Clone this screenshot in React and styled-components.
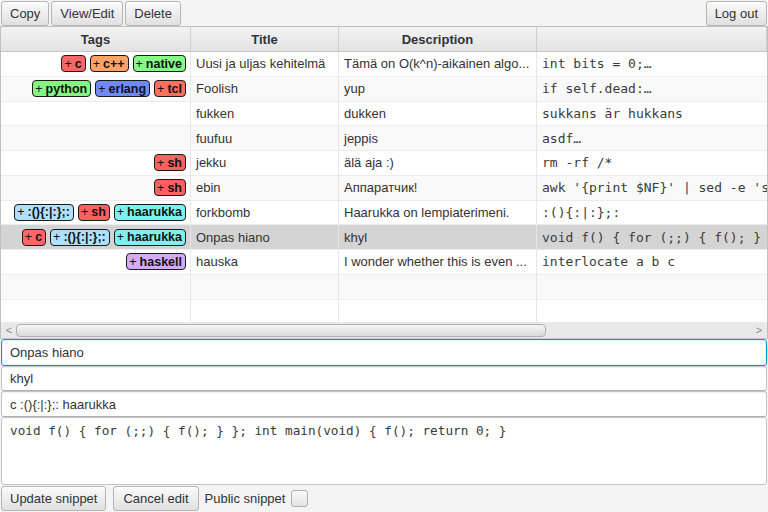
import styled, { createGlobalStyle } from "styled-components";

const GlobalStyle = createGlobalStyle`
  html, body {
    margin: 0;
    padding: 0;
    background: #f4f4f4;
  }
  body {
    font-family: "Liberation Sans", Arial, sans-serif;
    font-size: 13px;
    color: #333;
  }
`;

const tagColors = {
  c: "#ff6666",
  "c++": "#ffa366",
  native: "#85ff85",
  python: "#85f585",
  erlang: "#7089ff",
  tcl: "#ff7060",
  sh: "#ff6161",
  ":(){:|:};:": "#aee0ff",
  haarukka: "#7ff0f0",
  haskell: "#d4aaff",
};

const snippets = [
  { tags: ["c", "c++", "native"], title: "Uusi ja uljas kehitelmä", desc: "Tämä on O(k^n)-aikainen algo...", code: "int bits = 0;…" },
  { tags: ["python", "erlang", "tcl"], title: "Foolish", desc: "yup", code: "if self.dead:…" },
  { tags: [], title: "fukken", desc: "dukken", code: "sukkans är hukkans" },
  { tags: [], title: "fuufuu", desc: "jeppis", code: "asdf…" },
  { tags: ["sh"], title: "jekku", desc: "älä aja :)", code: "rm -rf /*" },
  { tags: ["sh"], title: "ebin", desc: "Аппаратчик!", code: "awk '{print $NF}' | sed -e 's/foo/bar/'" },
  { tags: [":(){:|:};:", "sh", "haarukka"], title: "forkbomb", desc: "Haarukka on lempiaterimeni.", code: ":(){:|:};:" },
  { tags: ["c", ":(){:|:};:", "haarukka"], title: "Onpas hiano", desc: "khyl", code: "void f() { for (;;) { f(); } }; int main", selected: true },
  { tags: ["haskell"], title: "hauska", desc: "I wonder whether this is even ...", code: "interlocate a b c" },
  null,
  null,
];

const Page = styled.div`
  width: 768px;
  height: 512px;
  display: flex;
  flex-direction: column;
  overflow: hidden;
  background: #f4f4f4;
`;

const Toolbar = styled.div`
  display: flex;
  align-items: center;
  gap: 2px;
  padding: 1px 1px 0 1px;
  height: 26px;
  box-sizing: border-box;
`;

const Spacer = styled.div`
  flex: 1;
`;

const Button = styled.button`
  font-family: "Liberation Sans", Arial, sans-serif;
  font-size: 13px;
  color: #333;
  height: 25px;
  padding: 0 ${(p) => p.$pad || 8}px;
  border: 1px solid #b5b5b5;
  border-radius: 3px;
  background: linear-gradient(#fbfbfb, #e0e0e0);
  box-shadow: inset 0 1px 0 #ffffff;
  cursor: pointer;
`;

const Table = styled.div`
  height: 295px;
  border: 1px solid #c0c0c0;
  border-bottom: none;
  background: #ffffff;
  display: flex;
  flex-direction: column;
  overflow: hidden;
`;

const Grid = styled.div`
  display: grid;
  grid-template-columns: 190px 148px 198px 230px;
`;

const HeaderCell = styled.div`
  height: 25px;
  box-sizing: border-box;
  display: flex;
  align-items: center;
  justify-content: center;
  font-weight: bold;
  color: #333;
  background: linear-gradient(#f3f3f3, #e3e3e3);
  border-right: 1px solid #cfcfcf;
  border-bottom: 1px solid #c8c8c8;
  &:last-child {
    border-right: none;
  }
`;

const Cell = styled.div`
  height: 24.75px;
  box-sizing: border-box;
  display: flex;
  align-items: center;
  padding: 0 4px 0 5px;
  gap: 4px;
  white-space: nowrap;
  overflow: hidden;
  justify-content: ${(p) => (p.$right ? "flex-end" : "flex-start")};
  border-right: 1px solid #e6e6e6;
  border-bottom: 1px solid #ececec;
  background: ${(p) => (p.$selected ? "#d4d4d4" : p.$odd ? "#f9f9f9" : "#ffffff")};
  font-family: ${(p) =>
    p.$mono ? '"DejaVu Sans Mono", monospace' : '"Liberation Sans", Arial, sans-serif'};
  font-size: 13px;
  color: ${(p) => (p.$mono ? "#3a3a3a" : "#333")};
  &:nth-child(4n) {
    border-right: none;
  }
`;

const Tag = styled.span`
  display: inline-flex;
  align-items: center;
  height: 17px;
  box-sizing: border-box;
  padding: 0 3px 0 2px;
  border: 1px solid #1a1a1a;
  border-radius: 4px;
  background: ${(p) => p.$color};
  font-weight: bold;
  font-size: 12.5px;
  color: #111;
  &::before {
    content: "+";
    font-weight: normal;
    margin-right: 3px;
  }
`;

const ScrollBar = styled.div`
  height: 17px;
  display: flex;
  align-items: center;
  background: #e9e9e9;
  border-left: 1px solid #c0c0c0;
  border-right: 1px solid #c0c0c0;
  border-bottom: 1px solid #c8c8c8;
  box-sizing: border-box;
  padding: 0 2px;
`;

const Arrow = styled.span`
  width: 12px;
  display: flex;
  justify-content: center;
  color: #8a8a8a;
  font-size: 11px;
`;

const Thumb = styled.div`
  width: 530px;
  height: 13px;
  margin-left: 1px;
  border: 1px solid #b0b0b0;
  border-radius: 4px;
  background: linear-gradient(#f6f6f6, #dadada);
  box-sizing: border-box;
`;

const Field = styled.div`
  height: ${(p) => p.$h || 25}px;
  box-sizing: border-box;
  display: flex;
  align-items: center;
  padding: 0 8px;
  margin: 0 1px;
  background: #ffffff;
  border: 1px solid ${(p) => (p.$focus ? "#039ed3" : "#c4c4c4")};
  border-bottom-color: ${(p) => (p.$focus ? "#039ed3" : "#b0b0b0")};
  border-radius: 3px;
  box-shadow: ${(p) => (p.$focus ? "inset 0 0 0 1px #dff1fa" : "inset 0 1px 1px #f0f0f0")};
  color: #333;
`;

const CodeArea = styled.div`
  flex: 1;
  margin: 0 1px;
  padding: 5px 8px;
  background: #ffffff;
  border: 1px solid #c4c4c4;
  border-radius: 3px;
  font-family: "DejaVu Sans Mono", monospace;
  font-size: 12.7px;
  color: #3a3a3a;
  white-space: pre;
`;

const BottomBar = styled.div`
  height: 27px;
  display: flex;
  align-items: center;
  gap: 7px;
  padding: 0 1px;
  box-sizing: border-box;
`;

const Label = styled.span`
  margin-left: -1px;
  font-size: 13px;
  color: #333;
`;

const CheckBox = styled.span`
  width: 17px;
  height: 17px;
  margin-left: -1px;
  box-sizing: border-box;
  border: 1px solid #b0b0b0;
  border-radius: 3px;
  background: linear-gradient(#fafafa, #e2e2e2);
`;

export default function App() {
  return (
    <Page>
      <GlobalStyle />
      <Toolbar>
        <Button>Copy</Button>
        <Button>View/Edit</Button>
        <Button>Delete</Button>
        <Spacer />
        <Button>Log out</Button>
      </Toolbar>
      <Table>
        <Grid>
          <HeaderCell>Tags</HeaderCell>
          <HeaderCell>Title</HeaderCell>
          <HeaderCell>Description</HeaderCell>
          <HeaderCell />
          {snippets.map((s, i) => {
            const odd = i % 2 === 1;
            const sel = s && s.selected;
            return [
              <Cell key={`t${i}`} $right $odd={odd} $selected={sel}>
                {s && s.tags.map((t) => (
                  <Tag key={t} $color={tagColors[t]}>{t}</Tag>
                ))}
              </Cell>,
              <Cell key={`n${i}`} $odd={odd} $selected={sel}>{s && s.title}</Cell>,
              <Cell key={`d${i}`} $odd={odd} $selected={sel}>{s && s.desc}</Cell>,
              <Cell key={`c${i}`} $mono $odd={odd} $selected={sel}>{s && s.code}</Cell>,
            ];
          })}
        </Grid>
      </Table>
      <ScrollBar>
        <Arrow>&lt;</Arrow>
        <Thumb />
        <Spacer />
        <Arrow>&gt;</Arrow>
      </ScrollBar>
      <Field $focus $h={27}>Onpas hiano</Field>
      <Field>khyl</Field>
      <Field $h={26}>c :(){"{"}:|:{"};"}: haarukka</Field>
      <CodeArea>{"void f() { for (;;) { f(); } }; int main(void) { f(); return 0; }"}</CodeArea>
      <BottomBar>
        <Button $pad={8}>Update snippet</Button>
        <Button $pad={9}>Cancel edit</Button>
        <Label>Public snippet</Label>
        <CheckBox />
      </BottomBar>
    </Page>
  );
}
